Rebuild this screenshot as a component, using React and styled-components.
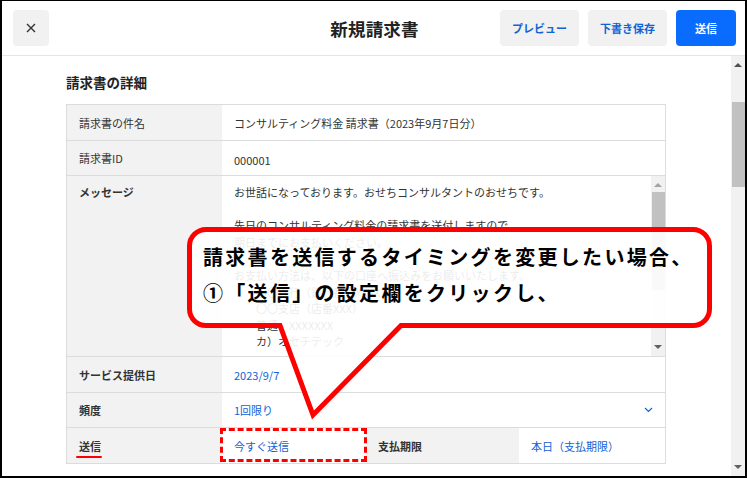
import React from 'react';
import styled, { createGlobalStyle } from 'styled-components';

const GlobalStyle = createGlobalStyle`
  html, body {
    margin: 0;
    padding: 0;
    background: #fff;
    overflow: hidden;
  }
  body {
    font-family: "Noto Sans CJK JP", "Noto Sans", sans-serif;
    color: #333;
  }
`;

const Frame = styled.div`
  position: relative;
  width: 747px;
  height: 478px;
  box-sizing: border-box;
  border-style: solid;
  border-color: #000;
  border-width: 1px 2px 2px 2px;
  display: flex;
  flex-direction: column;
  overflow: hidden;
`;

/* header */
const Header = styled.header`
  height: 54px;
  flex-shrink: 0;
  border-bottom: 1px solid #e6e6e6;
  display: grid;
  grid-template-columns: 1fr auto 1fr;
  align-items: center;
  padding: 0 9px 0 11px;
`;

const CloseButton = styled.button`
  width: 36px;
  height: 36px;
  border: none;
  border-radius: 4px;
  background: #f1f1f1;
  display: flex;
  align-items: center;
  justify-content: center;
  padding: 0;
  justify-self: start;
`;

const Title = styled.h1`
  margin: 0;
  font-size: 17.5px;
  font-weight: 700;
  color: #222;
  letter-spacing: 0.2px;
`;

const Actions = styled.div`
  justify-self: end;
  display: flex;
  gap: 9px;
`;

const HeadButton = styled.button`
  height: 36px;
  width: ${(p) => p.$w}px;
  border: none;
  border-radius: 4px;
  font-family: inherit;
  font-size: 11px;
  font-weight: 700;
  background: ${(p) => (p.$primary ? '#0a6cff' : '#f1f1f1')};
  color: ${(p) => (p.$primary ? '#fff' : '#1262d6')};
  padding: 0;
`;

/* body */
const Body = styled.div`
  flex: 1;
  display: flex;
  min-height: 0;
`;

const Content = styled.main`
  flex: 1;
  padding: 16px 0 0 64px;
`;

const SectionTitle = styled.h2`
  margin: 0 0 12px;
  height: 20px;
  line-height: 20px;
  font-size: 13.5px;
  font-weight: 700;
  color: #222;
`;

const Table = styled.div`
  width: 600px;
  box-sizing: border-box;
  border: 1px solid #dcdcdc;
  font-size: 11px;
`;

const Row = styled.div`
  display: grid;
  grid-template-columns: ${(p) => p.$cols || '155px 1fr'};
  height: ${(p) => p.$h}px;
  box-sizing: content-box;
  & + & {
    border-top: 1px solid #dcdcdc;
  }
`;

const Label = styled.div`
  background: #f2f2f2;
  padding-left: 12px;
  display: flex;
  align-items: ${(p) => (p.$top ? 'flex-start' : 'center')};
  padding-top: ${(p) => (p.$top ? '8px' : '0')};
  font-weight: ${(p) => (p.$light ? 400 : 700)};
  color: #333;
`;

const Value = styled.div`
  position: relative;
  padding: 0 12px;
  display: flex;
  align-items: center;
  justify-content: space-between;
  color: ${(p) => (p.$link ? '#1262d6' : '#333')};
  padding-top: ${(p) => p.$pt || 0}px;
`;

const Underlined = styled.span`
  position: relative;
  &::after {
    content: '';
    position: absolute;
    left: -3px;
    right: -1px;
    bottom: -4px;
    height: 2px;
    border-radius: 1px;
    background: #f00;
  }
`;

const Dashed = styled(Value)`
  &::after {
    content: '';
    position: absolute;
    inset: 0 -1px 1px -2px;
    border: 3px dashed #f00;
  }
`;

const MessageCell = styled.div`
  display: flex;
`;

const MessageText = styled.div`
  flex: 1;
  padding: 8px 12px 0;
  white-space: pre;
  line-height: 16.6px;
  color: #333;
  overflow: hidden;
`;

const Scrollbar = styled.div`
  width: ${(p) => p.$w}px;
  background: #f1f1f1;
  display: flex;
  flex-direction: column;
  align-items: center;
  flex-shrink: 0;
`;

const Arrow = styled.div`
  width: 0;
  height: 0;
  border-left: 4px solid transparent;
  border-right: 4px solid transparent;
  ${(p) =>
    p.$down
      ? 'border-top: 4px solid #606060;'
      : `border-bottom: 4px solid ${p.$dark ? '#505050' : '#a3a3a3'};`}
  margin: ${(p) => p.$m};
`;

const Thumb = styled.div`
  width: ${(p) => p.$w}px;
  height: ${(p) => p.$h}px;
  background: #c1c1c1;
  margin-top: ${(p) => p.$top}px;
`;

const Spacer = styled.div`
  flex: 1;
`;

/* callout overlay */
const Overlay = styled.svg`
  position: absolute;
  left: -2px;
  top: -1px;
  width: 747px;
  height: 478px;
  pointer-events: none;
`;

const CalloutText = styled.div`
  position: absolute;
  left: 201px;
  top: 238px;
  font-size: 20px;
  font-weight: 700;
  line-height: 36px;
  letter-spacing: 2.3px;
  color: #000;
  white-space: nowrap;
`;

const message = `お世話になっております。おせちコンサルタントのおせちです。

先日のコンサルティング料金の請求書を送付しますので、
期日までにお支払いください。

お支払い方法は、以下の口座へ振込みをお願いいたします。
　　〇〇銀行（銀行番号XXXX）
　　〇〇支店（店番XXX）
　　普通　XXXXXXX
　　カ）オセチテック`;

const App = () => {
  return (
    <>
      <GlobalStyle />
      <Frame>
        <Header>
          <CloseButton aria-label="閉じる">
            <svg width="10" height="10" viewBox="0 0 10 10">
              <path d="M1 1 L9 9 M9 1 L1 9" stroke="#333" strokeWidth="1.4" />
            </svg>
          </CloseButton>
          <Title>新規請求書</Title>
          <Actions>
            <HeadButton $w={79}>プレビュー</HeadButton>
            <HeadButton $w={79}>下書き保存</HeadButton>
            <HeadButton $w={60} $primary>送信</HeadButton>
          </Actions>
        </Header>

        <Body>
          <Content>
            <SectionTitle>請求書の詳細</SectionTitle>
            <Table>
              <Row $h={35}>
                <Label $light>請求書の件名</Label>
                <Value>コンサルティング料金 請求書（2023年9月7日分）</Value>
              </Row>
              <Row $h={34}>
                <Label $light>請求書ID</Label>
                <Value $pt={4}>000001</Value>
              </Row>
              <Row $h={180}>
                <Label $top>メッセージ</Label>
                <MessageCell>
                  <MessageText>{message}</MessageText>
                  <Scrollbar $w={14}>
                    <Arrow $m="7px 0 0" />
                    <Thumb $w={13} $h={98} $top={5} />
                    <Spacer />
                    <Arrow $down $m="0 0 7px" />
                  </Scrollbar>
                </MessageCell>
              </Row>
              <Row $h={35}>
                <Label>サービス提供日</Label>
                <Value $link>2023/9/7</Value>
              </Row>
              <Row $h={34}>
                <Label>頻度</Label>
                <Value $link>
                  1回限り
                  <svg width="9" height="6" viewBox="0 0 9 6">
                    <path d="M1 1 L4.5 4.5 L8 1" fill="none" stroke="#1262d6" strokeWidth="1.2" />
                  </svg>
                </Value>
              </Row>
              <Row $h={35} $cols="155px 144px 153px 1fr">
                <Label>
                  <Underlined>送信</Underlined>
                </Label>
                <Dashed $link>今すぐ送信</Dashed>
                <Label>支払期限</Label>
                <Value $link>本日（支払期限）</Value>
              </Row>
            </Table>
          </Content>
          <Scrollbar $w={14}>
            <Arrow $dark $m="7px 0 0" />
            <Thumb $w={13} $h={85} $top={35} />
            <Spacer />
            <Arrow $down $m="0 0 7px" />
          </Scrollbar>
        </Body>

        <Overlay viewBox="0 0 747 478">
          <path
            d="M206 229.5 H693 A16.5 16.5 0 0 1 709.5 246 V309 A16.5 16.5 0 0 1 693 325.5 H401 L313 415 L280 325.5 H206 A16.5 16.5 0 0 1 189.5 309 V246 A16.5 16.5 0 0 1 206 229.5 Z"
            fill="rgba(255,255,255,0.9)"
            stroke="#f00"
            strokeWidth="5"
            strokeLinejoin="miter"
          />
        </Overlay>
        <CalloutText>
          請求書を送信するタイミングを変更したい場合、
          <br />
          ①「送信」の設定欄をクリックし、
        </CalloutText>
      </Frame>
    </>
  );
};

export default App;
